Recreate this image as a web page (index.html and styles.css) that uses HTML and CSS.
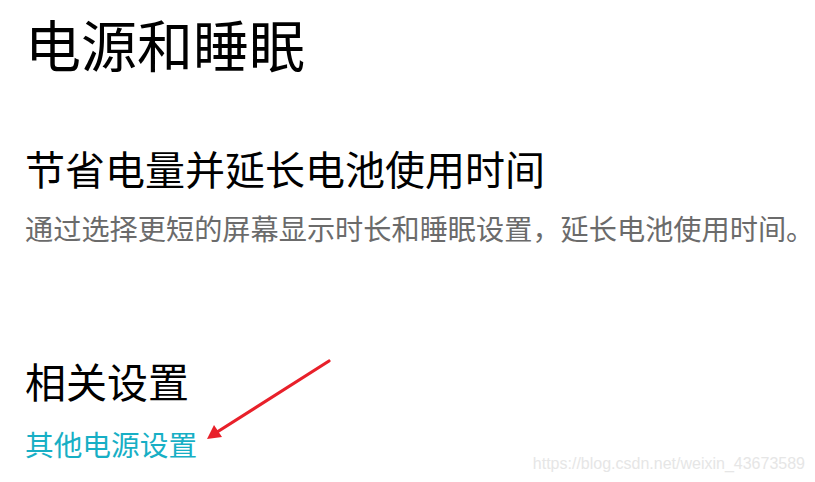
FILE: index.html
```html
<!DOCTYPE html>
<html lang="zh-CN">
<head>
<meta charset="utf-8">
<title>电源和睡眠</title>
<link rel="stylesheet" href="styles.css">
</head>
<body>
<main class="page">
  <h1 class="title">电源和睡眠</h1>
  <section class="battery">
    <h2 class="subtitle">节省电量并延长电池使用时间</h2>
    <p class="desc">通过选择更短的屏幕显示时长和睡眠设置，延长电池使用时间。</p>
  </section>
  <section class="related">
    <h2 class="subtitle small">相关设置</h2>
    <a class="link" href="#">其他电源设置</a>
  </section>
</main>
<svg class="arrow" width="140" height="100" viewBox="200 350 140 100" xmlns="http://www.w3.org/2000/svg">
  <line x1="329" y1="361" x2="214" y2="434" stroke="#e8202a" stroke-width="3.2" stroke-linecap="round"/>
  <polygon points="207,439 214,425 222,437" fill="#e8202a"/>
</svg>
<div class="watermark">https://blog.csdn.net/weixin_43673589</div>
</body>
</html>
```
FILE: styles.css
```css
html, body {
  margin: 0;
  padding: 0;
  background: #ffffff;
}
body {
  width: 815px;
  height: 482px;
  overflow: hidden;
  position: relative;
  font-family: "Noto Sans CJK SC", "Noto Sans", sans-serif;
}
.page {
  padding: 11px 0 0 25px;
  display: flex;
  flex-direction: column;
}
.title {
  margin: 0;
  font-size: 56px;
  line-height: 64px;
  font-weight: 400;
  color: #000;
}
.battery {
  margin-top: 69px;
  display: flex;
  flex-direction: column;
}
.subtitle {
  margin: 0;
  font-size: 40px;
  line-height: 48px;
  font-weight: 400;
  color: #000;
}
.subtitle.small {
  font-size: 41px;
}
.desc {
  margin: 18px 0 0 0;
  font-size: 28.2px;
  line-height: 36px;
  color: #6b6b6b;
}
.related {
  margin-top: 110px;
  display: flex;
  flex-direction: column;
}
.link {
  margin-top: 22px;
  font-size: 28.7px;
  line-height: 36px;
  color: #17afc5;
  text-decoration: none;
}
.arrow {
  position: absolute;
  left: 200px;
  top: 350px;
}
.watermark {
  position: absolute;
  right: 10px;
  top: 455px;
  font-family: "Liberation Sans", Arial, sans-serif;
  font-size: 16px;
  color: #e6e6e6;
}
```
